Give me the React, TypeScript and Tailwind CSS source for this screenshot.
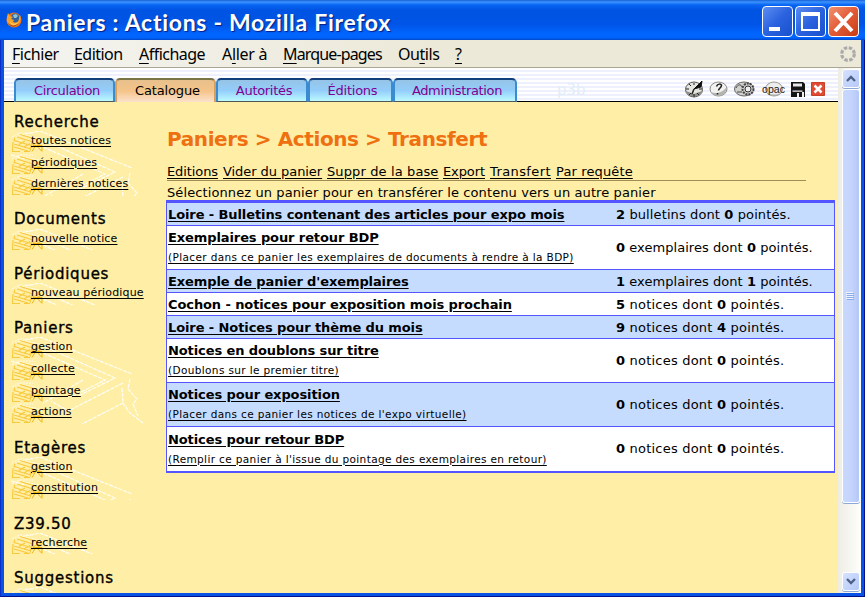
import React from "react";

const groups = [
  { title: "Recherche", items: ["toutes notices", "périodiques", "dernières notices"] },
  { title: "Documents", items: ["nouvelle notice"] },
  { title: "Périodiques", items: ["nouveau périodique"] },
  { title: "Paniers", items: ["gestion", "collecte", "pointage", "actions"] },
  { title: "Etagères", items: ["gestion", "constitution"] },
  { title: "Z39.50", items: ["recherche"] },
  { title: "Suggestions", items: [""] },
];

const rows = [
  { name: "Loire - Bulletins contenant des articles pour expo mois", note: "", total: 2, kind: "bulletins", marked: 0, blue: true },
  { name: "Exemplaires pour retour BDP", note: "(Placer dans ce panier les exemplaires de documents à rendre à la BDP)", total: 0, kind: "exemplaires", marked: 0, blue: false },
  { name: "Exemple de panier d'exemplaires", note: "", total: 1, kind: "exemplaires", marked: 1, blue: true },
  { name: "Cochon - notices pour exposition mois prochain", note: "", total: 5, kind: "notices", marked: 0, blue: false },
  { name: "Loire - Notices pour thème du mois", note: "", total: 9, kind: "notices", marked: 4, blue: true },
  { name: "Notices en doublons sur titre", note: "(Doublons sur le premier titre)", total: 0, kind: "notices", marked: 0, blue: false },
  { name: "Notices pour exposition", note: "(Placer dans ce panier les notices de l'expo virtuelle)", total: 0, kind: "notices", marked: 0, blue: true },
  { name: "Notices pour retour BDP", note: "(Remplir ce panier à l'issue du pointage des exemplaires en retour)", total: 0, kind: "notices", marked: 0, blue: false },
];

const actions = [
  { label: "Editions", box: "w-[56px] tracking-[-0.100px]" },
  { label: "Vider du panier", box: "w-[104px] tracking-[-0.060px]" },
  { label: "Suppr de la base", box: "w-[116px] tracking-[0.120px]" },
  { label: "Export", box: "w-[47px] tracking-[-0.100px]" },
  { label: "Transfert", box: "w-[66px] tracking-[0.400px]" },
  { label: "Par requête", box: "tracking-[0.130px]" },
];

const tabs = [
  { label: "Circulation", box: "w-[101px] pl-[5px] tracking-[-0.350px]", active: false },
  { label: "Catalogue", box: "w-[101px] pl-[4px] tracking-[-0.150px]", active: true },
  { label: "Autorités", box: "w-[92px] pl-[4px] tracking-[-0.300px]", active: false },
  { label: "Éditions", box: "w-[85px] pl-[4px] tracking-[-0.250px]", active: false },
  { label: "Administration", box: "w-[124px] pl-[4px] tracking-[-0.350px]", active: false },
];

function FirefoxLogo() {
  return (
    <svg className="mb-[3px]" width="16" height="16" viewBox="0 0 16 16">
      <circle cx="8" cy="8" r="7.5" fill="#e8741c" />
      <circle cx="9" cy="6.200" r="4.600" fill="#2c62a0" />
      <path d="M7 3l3-1 2 2-2 2-2 0z" fill="#8cc4dc" />
      <path d="M1 5l1-4 2 3 3 1-2 2 3 1-1 2c3 2 6 0 6-4l1-3c2 5-1 11-6 11S0 12 1 5z" fill="#f6a12c" />
      <path d="M4 9c1 3 5 4 8 1-1 4-8 4-8-1z" fill="#f9d060" />
      <path d="M1 9c2 5 8 6 12 2-3 5-10 5-12-2z" fill="#b8430f" />
    </svg>
  );
}

function WindowButton({ kind }: { kind: "min" | "max" | "close" }) {
  const close = kind === "close";
  return (
    <div
      className={
        "h-[31px] w-[31px] rounded-[4px] border border-white " +
        (close
          ? "bg-linear-to-br from-[#f0906f] via-[#e25a35] to-[#c73c10]"
          : "bg-linear-to-br from-[#5c8df2] via-[#2a62df] to-[#1a50cc]")
      }
    >
      <svg width="29" height="29" viewBox="0 0 29 29" fill="none" stroke="#fff">
        {kind === "min" && <path d="M6 22h11" strokeWidth="4" />}
        {kind === "max" && (
          <>
            <path d="M6 6v17h17v-17" strokeWidth="2" />
            <path d="M5 7h19" strokeWidth="4" />
          </>
        )}
        {close && <path d="M6 6l17 18M23 6L6 24" strokeWidth="4" />}
      </svg>
    </div>
  );
}

function BookSketch({ height }: { height: number }) {
  return (
    <svg className="absolute top-0 left-0" width="134" height={height} fill="none" stroke="#fffef6" strokeWidth="1.200" strokeDasharray="4 1">
      <path d="M9 4L29 0L121 37" />
      <path d="M32 9L104 41L67 59" />
      <path d="M32 16L94 43L62 59M72 43L32 66M112 46L57 74L40 64" />
      <path d="M111 51L112 66L119 76L132 86M119 42L117 52L126 62L122 67L127 79M112 66L71 87M0 24L14 28" />
    </svg>
  );
}

function ShelfIcon() {
  return (
    <svg className="absolute top-px left-0" width="36" height="20" fill="none">
      <path d="M4 6L9 2L28 6L31 8M3 12L10 8M1 5L8 1H22" stroke="#fffbe8" strokeDasharray="2 1" />
      <g stroke="#f7c93c" strokeWidth="1.100">
        <path d="M9 2.500L26 7.500M6 5L22 10M3 8.500L20 13.500L30 9.500" />
        <path d="M4 5.500L3 9M21 10L20 13M2 10L1.500 19.500M3 12L18 16.500L29 12" />
        <path d="M3 15L17 19M8 12.500L14 9M13 15L19 11.500M1 19.500H9M13 19.500H19" />
        <path d="M26 8L27 11M20 14L19 19" />
      </g>
      <path d="M21 19.500L25 13L31 19.500M22 13.500H31V19" stroke="#eeb413" />
    </svg>
  );
}

function Sidebar() {
  return (
    <div className="h-full w-[162px] shrink-0 overflow-hidden pl-[7px] text-black">
      {groups.map((g, i) => (
        <div key={g.title}>
          <div className={"pl-[3px] text-[15px] leading-[17.200px] tracking-[0.740px] [-webkit-text-stroke:0.350px_black] " + (i === 0 ? "pt-[11.800px]" : "pt-[15.500px]")}>
            {g.title}
          </div>
          <div className="relative">
            <BookSketch height={g.items.length * 21.67} />
            {g.items.map((it) => (
              <div key={it} className="relative h-[21.670px] pl-[20px] text-[11px] leading-[20.600px] tracking-[0.150px]">
                <ShelfIcon />
                <span className="relative underline underline-offset-2">{it}</span>
              </div>
            ))}
          </div>
        </div>
      ))}
    </div>
  );
}

function ToolIcons() {
  return (
    <svg width="144" height="20" viewBox="0 0 144 20" fill="none" stroke="#555" strokeWidth="1">
      <ellipse cx="9" cy="10.500" rx="8.500" ry="7.500" fill="#e4e4e0" stroke="#555" />
      <path d="M1 12c2 7 14 8 16 0l-8 3z" fill="#8c8c88" stroke="none" />
      <path d="M9 4v2M9 15v3M1 10h3M14 10h3M4 5l2 2M4 16l2-2M14 16l-2-2" stroke="#222" />
      <path d="M9 10l8-8-1 6z" fill="#111" stroke="#111" />
      <path d="M9 10l-2 5" stroke="#222" strokeWidth="1.500" />
      <ellipse cx="33.500" cy="10" rx="8.500" ry="7" fill="#f2f2f0" stroke="#888" />
      <path d="M26 13c4 2 11 1 15-4 1 5-3 8-7 8-4 0-7-2-8-4z" fill="#b4b4b0" stroke="none" />
      <path d="M31.500 7.500c1-3 5-3 5-1 0 2-3 3-3 5M32.500 14v1.500" stroke="#222" strokeWidth="1.500" />
      <ellipse cx="59" cy="10" rx="9.500" ry="7" fill="#d0d0cc" stroke="#666" />
      <circle cx="63" cy="10" r="5.500" fill="#ccc" stroke="#444" strokeWidth="2" strokeDasharray="2 1" />
      <circle cx="63" cy="10" r="3" fill="#eee" stroke="#333" />
      <path d="M51 9c2-4 5-4 6-1M52 13h5" stroke="#444" />
      <ellipse cx="89" cy="10" rx="8.500" ry="7" fill="#eeeeec" stroke="#999" />
      <path d="M82 14c4 2 10 2 14 0-3 4-11 4-14 0z" fill="#aaa" stroke="none" />
      <text x="77" y="13.500" fontSize="11.500" fontFamily="Liberation Sans, sans-serif" fill="#222" stroke="none" textLength="23" lengthAdjust="spacingAndGlyphs">opac</text>
      <path d="M106 3h12l2 2v13h-14z" fill="#151515" stroke="none" />
      <path d="M108 6h9v1h-9zM107.500 11.500h10v1.200h-10zM112 14h2v4h-2zM117 13h2v5h-2z" fill="#eee" stroke="none" />
      <path d="M108 4.500h9v3h-9z" fill="#e8e8e8" stroke="none" />
      <path d="M126.500 3.500h13v13h-13z" fill="#e24b33" stroke="#c8402a" />
      <path d="M129.500 6.500l7 7M136.500 6.500l-7 7" stroke="#fff" strokeWidth="2.500" />
    </svg>
  );
}

function Arrow({ down }: { down?: boolean }) {
  return (
    <div className="flex h-[19px] w-[18px] shrink-0 items-center justify-center rounded-[3px] border border-white bg-linear-to-br from-[#d5e1ff] to-[#b5c9f8] shadow-[0_1px_0_#8ba8dc]">
      <svg width="10" height="7" viewBox="0 0 10 7" fill="none" stroke="#4d6185" strokeWidth="2.300">
        <path d={down ? "M1 1l4 4 4-4" : "M1 6l4-4 4 4"} />
      </svg>
    </div>
  );
}

function Scrollbar() {
  return (
    <div className="flex h-full w-[23px] shrink-0 flex-col items-center bg-linear-to-r from-[#eeede5] to-[#fefefb] pt-px pb-[2px] pl-[2px]">
      <Arrow />
      <div className="mt-px flex h-[414px] w-[18px] shrink-0 flex-col items-center justify-center gap-px rounded-[3px] border border-white bg-linear-to-r from-[#c9d8fd] via-[#c4d4fc] to-[#b4c8f7] shadow-[0_1px_0_#8ba8dc]">
        {[0, 1, 2, 3].map((n) => (
          <div key={n} className="h-px w-[7px] bg-[#8caaf0] shadow-[-1px_-1px_0_#eef4ff]" />
        ))}
      </div>
      <div className="grow" />
      <Arrow down />
    </div>
  );
}

function Menu() {
  const u = "underline underline-offset-[3px] decoration-1";
  return (
    <div className="flex h-[28px] shrink-0 items-center border-b border-[#a9a695] bg-linear-to-r from-[#f4f4f1] via-[#ece9d8] to-[#ece9d8] pt-px pl-[8px] font-['Noto_Sans',sans-serif] text-[16px] whitespace-nowrap text-black">
      <div className="w-[62px] tracking-[-0.450px]"><span className={u}>F</span>ichier</div>
      <div className="w-[65px] tracking-[-0.550px]"><span className={u}>E</span>dition</div>
      <div className="w-[83px] tracking-[-0.520px]"><span className={u}>A</span>ffichage</div>
      <div className="w-[61px] tracking-[-0.300px]">A<span className={u}>l</span>ler à</div>
      <div className="w-[115px] tracking-[-0.850px]"><span className={u}>M</span>arque-pages</div>
      <div className="w-[57px] tracking-[-0.450px]">Ou<span className={u}>t</span>ils</div>
      <div className={u}>?</div>
      <div className="grow" />
      <svg className="mr-[4px]" width="18" height="18" viewBox="0 0 18 18" fill="none">
        <circle cx="9" cy="9" r="6.300" stroke="#aaa" strokeWidth="3.200" strokeDasharray="3.400 1.550" />
      </svg>
    </div>
  );
}

function Header() {
  return (
    <div className="flex h-[34px] shrink-0 items-end border-b border-black bg-[repeating-linear-gradient(to_bottom,#fff_0px,#fff_2px,#eef0fd_2px,#eef0fd_4px)] pl-[10px]">
      {tabs.map((t) => (
        <div
          key={t.label}
          className={
            "-mb-px flex h-[24px] shrink-0 items-center justify-center rounded-t-[5px] border-x-2 border-t-2 text-[13px] whitespace-nowrap " +
            t.box +
            (t.active
              ? " border-x-[#d8a05c] border-t-[#7b7446] bg-linear-to-b from-[#e8c08c] via-[#f5c489] to-[#fbe2cc] text-black"
              : " border-b border-x-[#3a8bd0] border-t-[#123f7c] border-b-[#555] bg-linear-to-b from-[#96c4e6] via-[#93cdfb] to-[#bdfaff] text-[#800090]")
          }
        >
          {t.label}
        </div>
      ))}
      <div className="ml-[40px] h-[21px] grow text-[15px] leading-[20px] text-[#e3edf8]">p3b</div>
      <div className="mr-[9px] mb-[2px]"><ToolIcons /></div>
    </div>
  );
}

const kindTracking: Record<string, string> = {
  notices: "tracking-[0.210px]",
  bulletins: "tracking-[0.110px]",
  exemplaires: "tracking-[0.050px]",
};

function Basket({ row, last }: { row: (typeof rows)[number]; last: boolean }) {
  return (
    <div
      className={
        "flex items-center pl-px text-[13px] text-black " +
        (row.blue ? "bg-[#c5dcff] " : "bg-white ") +
        (row.note ? "h-[44px] " : "h-[23px] pt-px ") +
        (last ? "-mb-px" : "border-b border-[#5555ff]")
      }
    >
      <div className="w-[448px] shrink-0 whitespace-nowrap">
        <div className="text-[13px] leading-[20px] font-bold tracking-[-0.100px] underline underline-offset-2">{row.name}</div>
        {row.note && <div className="text-[10.500px] leading-[19px] tracking-[0.370px] underline underline-offset-2">{row.note}</div>}
      </div>
      <div className={"whitespace-nowrap " + kindTracking[row.kind]}>
        <b>{row.total}</b> {row.kind} dont <b>{row.marked}</b> pointés.
      </div>
    </div>
  );
}

function Main() {
  return (
    <div className="min-w-0 grow pt-[25px] text-black">
      <h1 className="pl-px text-[20px] leading-[24px] font-bold tracking-[-0.400px] whitespace-nowrap text-[#ee7010]">Paniers &gt; Actions &gt; Transfert</h1>
      <div className="mt-[11px] ml-px flex h-[19px] w-[639px] border-b border-[#a08c55] text-[13px] leading-[19px] whitespace-nowrap">
        {actions.map((a) => (
          <div key={a.label} className={"underline underline-offset-2 " + a.box}>{a.label}</div>
        ))}
      </div>
      <div className="h-[19px] pl-px text-[13px] leading-[23px] tracking-[0.100px] whitespace-nowrap">Sélectionnez un panier pour en transférer le contenu vers un autre panier</div>
      <div className="w-[669px] border-x border-y-[3px] border-[#5555ff]">
        {rows.map((r, i) => (
          <Basket key={r.name} row={r} last={i === rows.length - 1} />
        ))}
      </div>
    </div>
  );
}

export default function App() {
  return (
    <div className="flex h-[597px] w-[865px] flex-col overflow-hidden bg-[#0349dc] font-['DejaVu_Sans',Verdana,sans-serif]">
      <div className="flex h-[40px] shrink-0 items-center bg-[linear-gradient(to_bottom,#1761d8_0px,#3c94ff_2px,#0764f2_5px,#0054e3_10px,#0054e6_24px,#0066ff_34px,#0063fa_38px,#0046c8_40px)] pt-[3px] pr-[6px] pl-[6px]">
        <FirefoxLogo />
        <div className="ml-[4px] grow font-['Lato',sans-serif] text-[23px] leading-[30px] font-bold tracking-[0.710px] whitespace-nowrap text-white [text-shadow:1px_1px_1px_#0a1c80]">Paniers : Actions - Mozilla Firefox</div>
        <div className="flex gap-[2px]">
          <WindowButton kind="min" />
          <WindowButton kind="max" />
          <WindowButton kind="close" />
        </div>
      </div>
      <div className="h-[557px] border-x border-b border-l-[#0a30c8] border-r-[#00138c] border-b-[#00138c]">
        <div className="flex h-[556px] flex-col border-x-[3px] border-b-[3px] border-[#0852e4]">
          <Menu />
          <div className="flex h-[525px]">
            <div className="flex w-[834px] flex-col overflow-hidden bg-[#ffeea6]">
              <Header />
              <div className="flex h-[491px]">
                <Sidebar />
                <Main />
              </div>
            </div>
            <Scrollbar />
          </div>
        </div>
      </div>
    </div>
  );
}
